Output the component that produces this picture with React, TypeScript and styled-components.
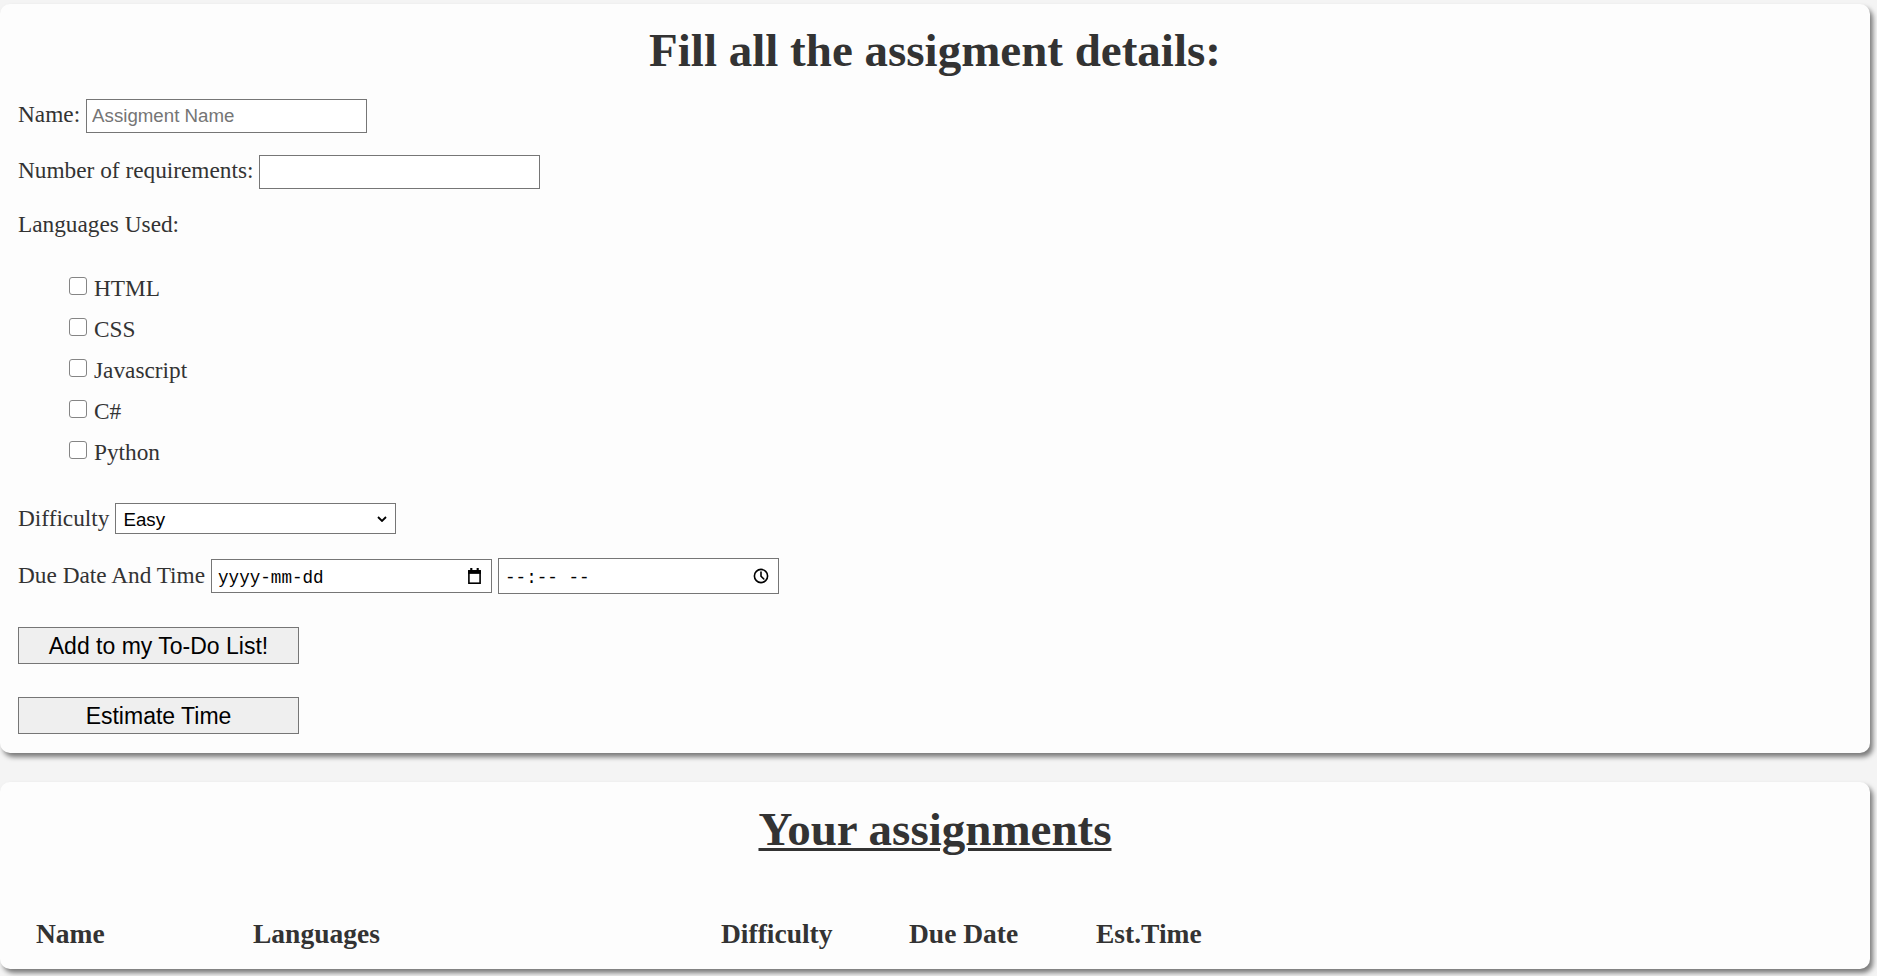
import React from "react";
import styled, { createGlobalStyle } from "styled-components";

const GlobalStyle = createGlobalStyle`
  html, body {
    margin: 0;
    padding: 0;
    background: #f4f4f4;
  }
  body {
    font-family: "Liberation Serif", "Times New Roman", serif;
    color: #333;
  }
  * { box-sizing: border-box; }
`;

const Page = styled.div`
  display: flex;
  flex-direction: column;
  gap: 29px;
  padding: 4px 7px 0 0;
  min-height: 976px;
`;

const Card = styled.section<{ $pad: string }>`
  background: #fdfdfd;
  border-radius: 10px;
  box-shadow: 3px 4px 5px rgba(0, 0, 0, 0.5);
  padding: ${(p) => p.$pad};
  display: flex;
  flex-direction: column;
`;

const Title = styled.h1<{ $underline?: boolean }>`
  margin: 0;
  font-size: 47px;
  line-height: 56px;
  font-weight: 700;
  text-align: center;
  color: #333;
  text-decoration: ${(p) => (p.$underline ? "underline" : "none")};
  text-decoration-thickness: 3px;
  text-underline-offset: 3px;
`;

const Row = styled.div<{ $mt: number }>`
  display: flex;
  align-items: baseline;
  gap: 6px;
  margin-top: ${(p) => p.$mt}px;
`;

const Label = styled.label`
  font-size: 23.3px;
  line-height: 27px;
  color: #333;
`;

const Plain = styled.div<{ $mt: number }>`
  margin-top: ${(p) => p.$mt}px;
  font-size: 23.3px;
  line-height: 27px;
  color: #333;
`;

const TextInput = styled.input`
  width: 281px;
  height: 34px;
  border: 1px solid #767676;
  border-radius: 0;
  padding: 0 5px;
  font-family: "Liberation Sans", Arial, sans-serif;
  font-size: 18.7px;
  color: #000;
  background: #fff;
  outline: none;
  &::placeholder {
    color: #757575;
  }
`;

const CheckList = styled.div<{ $mt: number }>`
  display: flex;
  flex-direction: column;
  gap: 14px;
  margin-top: ${(p) => p.$mt}px;
  padding-left: 51px;
`;

const CheckRow = styled.label`
  display: flex;
  align-items: flex-start;
  gap: 7px;
  font-size: 23.3px;
  line-height: 27px;
  color: #333;
`;

const Box = styled.input`
  appearance: none;
  width: 18px;
  height: 18px;
  margin: 2px 0 0 0;
  border: 1px solid #858585;
  border-radius: 3px;
  background: #fff;
  flex: none;
`;

const SelectWrap = styled.div`
  position: relative;
  display: inline-flex;
  align-items: baseline;
`;

const Select = styled.select`
  appearance: none;
  width: 281px;
  height: 31px;
  border: 1px solid #767676;
  border-radius: 0;
  padding: 2px 7px 0;
  font-family: "Liberation Sans", Arial, sans-serif;
  font-size: 18.7px;
  color: #000;
  background: #fff;
  outline: none;
`;

const Chevron = styled.svg`
  position: absolute;
  right: 9px;
  top: 13px;
  pointer-events: none;
`;

const FakeField = styled.div<{ $h: number }>`
  display: inline-flex;
  align-items: center;
  justify-content: space-between;
  width: 281px;
  height: ${(p) => p.$h}px;
  border: 1px solid #767676;
  background: #fff;
  padding: 0 9px 0 6px;
  font-family: "Liberation Mono", "Courier New", monospace;
  font-size: 17.6px;
  color: #000;
`;

const FieldText = styled.span`
  white-space: pre;
  line-height: 20px;
  padding-top: 3px;
`;

const Button = styled.button<{ $mt: number }>`
  margin-top: ${(p) => p.$mt}px;
  width: 281px;
  height: 37px;
  border: 1px solid #767676;
  border-radius: 0;
  background: #efefef;
  font-family: "Liberation Sans", Arial, sans-serif;
  font-size: 23px;
  color: #000;
  padding: 1px 0 0;
  cursor: pointer;
`;

const HeaderRow = styled.div`
  display: grid;
  grid-template-columns: 217px 468px 188px 187px 1fr;
  margin-top: 61px;
  padding-left: 36px;
`;

const Th = styled.div`
  font-size: 27.5px;
  line-height: 32px;
  font-weight: 700;
  color: #333;
  text-align: left;
`;

const CalendarIcon = () => (
  <svg width="15" height="16" viewBox="0 0 14 15">
    <rect x="3" y="0" width="2" height="3" fill="#000" />
    <rect x="9" y="0" width="2" height="3" fill="#000" />
    <rect x="1.75" y="2.75" width="10.5" height="11.5" fill="none" stroke="#000" strokeWidth="1.5" />
    <rect x="1" y="2" width="12" height="3.5" fill="#000" />
  </svg>
);

const ClockIcon = () => (
  <svg width="16" height="16" viewBox="0 0 16 16">
    <circle cx="8" cy="8" r="6.6" fill="none" stroke="#000" strokeWidth="1.6" />
    <path d="M8 4 V8.2 L10.8 11" fill="none" stroke="#000" strokeWidth="1.6" strokeLinecap="round" strokeLinejoin="round" />
  </svg>
);

const languages = ["HTML", "CSS", "Javascript", "C#", "Python"];

export default function App() {
  return (
    <>
      <GlobalStyle />
      <Page>
        <Card $pad="18px 18px 19px 18px">
          <Title>Fill all the assigment details:</Title>
          <Row $mt={21}>
            <Label htmlFor="name">Name:</Label>
            <TextInput id="name" type="text" placeholder="Assigment Name" />
          </Row>
          <Row $mt={22}>
            <Label htmlFor="reqs">Number of requirements:</Label>
            <TextInput id="reqs" type="text" />
          </Row>
          <Plain $mt={22}>Languages Used:</Plain>
          <CheckList $mt={37}>
            {languages.map((l) => (
              <CheckRow key={l}>
                <Box type="checkbox" />
                <span>{l}</span>
              </CheckRow>
            ))}
          </CheckList>
          <Row $mt={37}>
            <Label htmlFor="diff">Difficulty</Label>
            <SelectWrap>
              <Select id="diff" defaultValue="Easy">
                <option>Easy</option>
                <option>Medium</option>
                <option>Hard</option>
              </Select>
              <Chevron width="10" height="6" viewBox="0 0 10 6">
                <path d="M1 1 L5 5 L9 1" fill="none" stroke="#000" strokeWidth="1.8" />
              </Chevron>
            </SelectWrap>
          </Row>
          <Row $mt={24}>
            <Label>Due Date And Time</Label>
            <FakeField $h={34}>
              <FieldText>yyyy-mm-dd</FieldText>
              <CalendarIcon />
            </FakeField>
            <FakeField $h={36}>
              <FieldText>--:-- --</FieldText>
              <ClockIcon />
            </FakeField>
          </Row>
          <Button $mt={33}>Add to my To-Do List!</Button>
          <Button $mt={33}>Estimate Time</Button>
        </Card>
        <Card $pad="19px 0 19px 0">
          <Title $underline>Your assignments</Title>
          <HeaderRow>
            <Th>Name</Th>
            <Th>Languages</Th>
            <Th>Difficulty</Th>
            <Th>Due Date</Th>
            <Th>Est.Time</Th>
          </HeaderRow>
        </Card>
      </Page>
    </>
  );
}
